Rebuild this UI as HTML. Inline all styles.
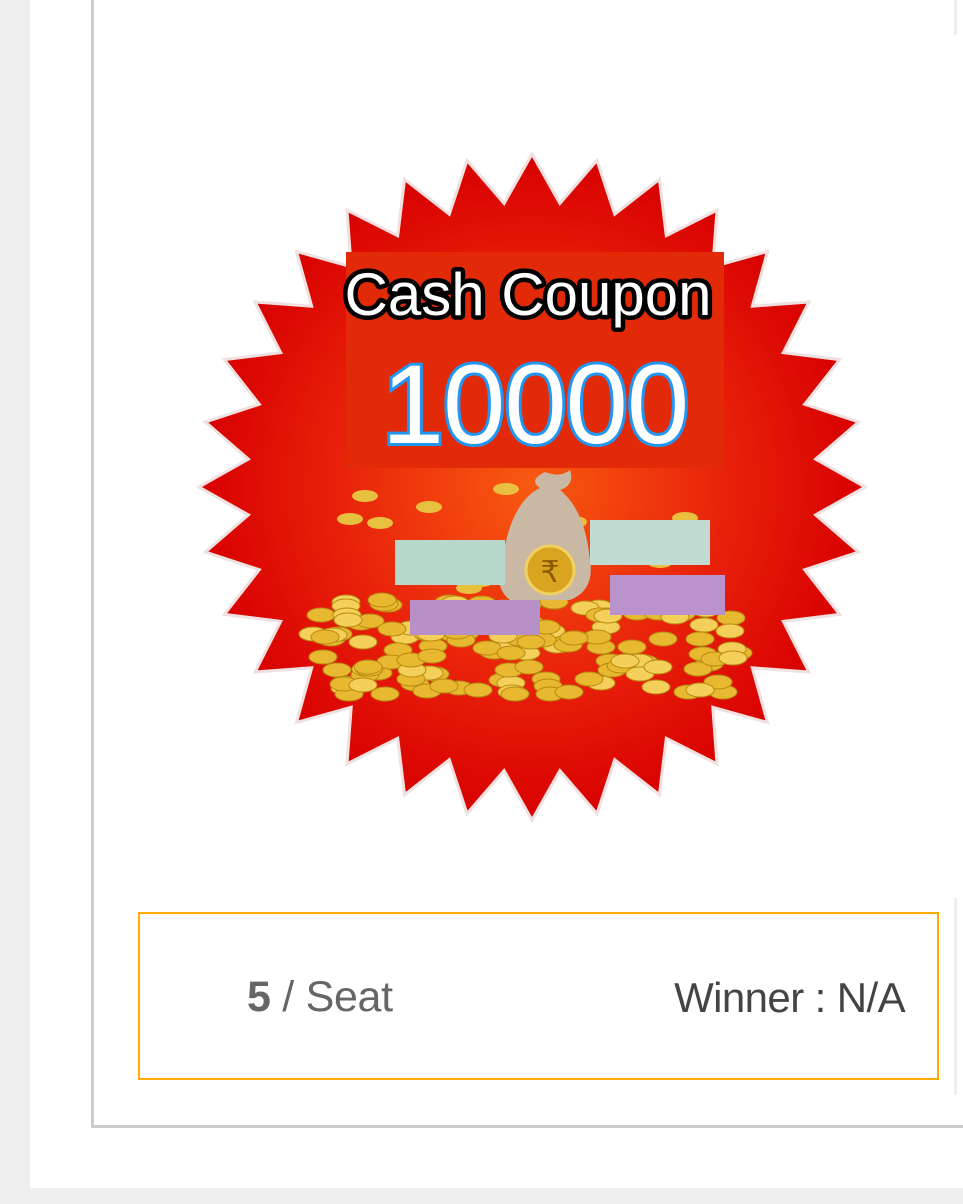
<!DOCTYPE html>
<html><head><meta charset="utf-8"><style>
html,body{margin:0;padding:0}
body{width:963px;height:1204px;background:#eeeeee;position:relative;overflow:hidden;font-family:"Liberation Sans",sans-serif}
.page{position:absolute;left:30px;top:0;width:933px;height:1188px;background:#fff}
.card{position:absolute;left:91px;top:-5px;width:900px;height:1130px;border-left:3px solid #ccc;border-bottom:3px solid #ccc}
.rl1{position:absolute;left:954px;top:0;width:3px;height:35px;background:#eee}
.rl2{position:absolute;left:954px;top:898px;width:3px;height:197px;background:#eee}
.box{position:absolute;left:138px;top:912px;width:797px;height:164px;border:2px solid #ffaa00}
.seat{position:absolute;left:247px;top:972px;font-size:43px;color:#666;letter-spacing:-0.3px;line-height:50px}
.seat b{color:#666}
.win{position:absolute;right:58px;top:973px;font-size:42px;color:#444;letter-spacing:-0.6px;line-height:50px}
</style></head><body>
<div class="page"></div>
<div class="card"></div>
<div class="rl1"></div><div class="rl2"></div>
<svg width="963" height="900" style="position:absolute;left:0;top:0">
<defs>
<radialGradient id="g" cx="0.5" cy="0.5" r="0.5">
<stop offset="0" stop-color="#f85a10"/><stop offset="0.6" stop-color="#e8200a"/><stop offset="1" stop-color="#d80000"/>
</radialGradient>
</defs>
<polygon id="star" fill="url(#g)" stroke="#f0e0e0" stroke-width="3"/>
<rect x="346" y="252" width="378" height="216" fill="#e22a08"/>
<g id="coins"></g>
<path d="M505 545 Q515 500 540 488 Q528 480 545 472 Q560 478 570 470 Q575 485 560 490 Q585 510 590 560 Q595 590 570 600 L510 600 Q490 585 505 545Z" fill="#c9b8a4"/>
<circle cx="550" cy="570" r="24" fill="#d9a520" stroke="#f0d060" stroke-width="3"/>
<text x="550" y="582" font-size="30" text-anchor="middle" fill="#8a5a00" font-family="DejaVu Sans">₹</text>
<rect x="395" y="540" width="110" height="45" fill="#b8d8cc"/>
<rect x="590" y="520" width="120" height="45" fill="#c0dcd2"/>
<rect x="410" y="600" width="130" height="35" fill="#b890c8"/>
<rect x="610" y="575" width="115" height="40" fill="#bb93cc"/>
<text x="528" y="315" font-size="60" text-anchor="middle" fill="#fff" stroke="#000" stroke-width="9" paint-order="stroke" stroke-linejoin="round" letter-spacing="0">Cash Coupon</text>
<text x="535" y="443" font-size="112" text-anchor="middle" fill="#fff" stroke="#2196f3" stroke-width="6" paint-order="stroke" letter-spacing="-1">10000</text>
</svg>
<div class="box"></div>
<div class="seat"><b>5</b> / Seat</div>
<div class="win">Winner : N/A</div>
<script>
var cx=532,cy=487,n=32,R=333,r=285,p=[];
for(var i=0;i<2*n;i++){var a=-Math.PI/2+i*Math.PI/n,rr=i%2?r:R;p.push((cx+rr*Math.cos(a)).toFixed(1)+","+(cy+rr*Math.sin(a)).toFixed(1));}
document.getElementById('star').setAttribute('points',p.join(' '));
var g=document.getElementById('coins'),s='';
var seed=7;function rnd(){seed=(seed*9301+49297)%233280;return seed/233280;}
for(var k=0;k<140;k++){var x=310+rnd()*440,y=600+rnd()*95;if(Math.abs(x-530)>200&&y>670)continue;
s+='<ellipse cx="'+x.toFixed(0)+'" cy="'+y.toFixed(0)+'" rx="14" ry="7" fill="'+(k%3?'#e8b830':'#f4d05a')+'" stroke="#b88a10" stroke-width="1"/>';}
for(var k=0;k<14;k++){var x=330+rnd()*400,y=480+rnd()*110;s+='<ellipse cx="'+x.toFixed(0)+'" cy="'+y.toFixed(0)+'" rx="13" ry="6" fill="#e8c040"/>';}
g.innerHTML=s;
</script>
</body></html>
